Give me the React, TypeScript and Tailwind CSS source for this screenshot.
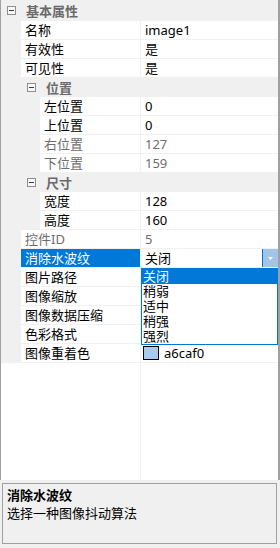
import React from 'react';

type Row =
  | { kind: 'cat'; label: string; level: number }
  | {
      kind: 'prop';
      name: string;
      value?: string;
      level: number;
      disabled?: boolean;
      selected?: boolean;
      swatch?: string;
    };

const rows: Row[] = [
  { kind: 'cat', label: '基本属性', level: 0 },
  { kind: 'prop', name: '名称', value: 'image1', level: 0 },
  { kind: 'prop', name: '有效性', value: '是', level: 0 },
  { kind: 'prop', name: '可见性', value: '是', level: 0 },
  { kind: 'cat', label: '位置', level: 1 },
  { kind: 'prop', name: '左位置', value: '0', level: 1 },
  { kind: 'prop', name: '上位置', value: '0', level: 1 },
  { kind: 'prop', name: '右位置', value: '127', level: 1, disabled: true },
  { kind: 'prop', name: '下位置', value: '159', level: 1, disabled: true },
  { kind: 'cat', label: '尺寸', level: 1 },
  { kind: 'prop', name: '宽度', value: '128', level: 1 },
  { kind: 'prop', name: '高度', value: '160', level: 1 },
  { kind: 'prop', name: '控件ID', value: '5', level: 0, disabled: true },
  { kind: 'prop', name: '消除水波纹', value: '关闭', level: 0, selected: true },
  { kind: 'prop', name: '图片路径', value: '', level: 0 },
  { kind: 'prop', name: '图像缩放', value: '', level: 0 },
  { kind: 'prop', name: '图像数据压缩', value: '', level: 0 },
  { kind: 'prop', name: '色彩格式', value: '', level: 0 },
  { kind: 'prop', name: '图像重着色', value: 'a6caf0', level: 0, swatch: '#a6caf0' },
];

const options = ['关闭', '稍弱', '适中', '稍强', '强烈'];

const MinusBox = () => (
  <div className="w-[9px] h-[9px] border border-[#8e8f8f] bg-[#f7f7f7] flex items-center justify-center shrink-0">
    <div className="w-[5px] h-px bg-[#3c3c3c]" />
  </div>
);

const CategoryRow = ({ label, level, first }: { label: string; level: number; first: boolean }) => (
  <div
    className={`flex items-center bg-[#f0f0f0] ${first ? 'h-[21px]' : 'h-[19px]'} ${
      level === 0 ? 'pl-[6px]' : 'pl-[26px]'
    }`}
  >
    <MinusBox />
    <span className="ml-[10px] font-bold text-[#6a6a6a]">{label}</span>
  </div>
);

const PropRow = ({ row }: { row: Extract<Row, { kind: 'prop' }> }) => {
  const muted = row.disabled ? 'text-[#6d6d6d]' : 'text-black';
  return (
    <div className="flex h-[19px]">
      <div className={`bg-[#f0f0f0] shrink-0 ${row.level === 0 ? 'w-[20px]' : 'w-[39px]'}`} />
      <div
        className={`flex items-center pl-[4px] border-b border-[#f0f0f0] shrink-0 ${
          row.level === 0 ? 'w-[119px]' : 'w-[100px]'
        } ${row.selected ? 'bg-[#0078d7] text-white' : muted}`}
      >
        {row.name}
      </div>
      <div className={`flex flex-1 items-center border-l border-b border-[#f0f0f0] ${muted}`}>
        {row.swatch ? (
          <div className="flex items-center pl-[2px]">
            <div className="w-[16px] h-[14px] border border-black" style={{ background: row.swatch }} />
            <span className="ml-[5px]">{row.value}</span>
          </div>
        ) : (
          <span className="pl-[4px] flex-1">{row.value}</span>
        )}
        {row.selected && (
          <div className="w-[16px] h-[18px] border-l border-[#0078d7] bg-[#a2c4e6] flex items-center justify-center self-start">
            <svg width="5" height="3" viewBox="0 0 5 3">
              <polygon points="0,0 5,0 2.5,3" fill="#ffffff" />
            </svg>
          </div>
        )}
      </div>
    </div>
  );
};

export default function App() {
  return (
    <div className="w-[280px] h-[548px] bg-[#f0f0f0] flex flex-col text-[13px] leading-[18px] font-['Noto_Sans','Noto_Sans_CJK_SC',sans-serif]">
      <div className="relative h-[480px] bg-white border-l border-r-2 border-[#a0a0a0] flex flex-col">
        {rows.map((row, i) =>
          row.kind === 'cat' ? (
            <CategoryRow key={i} label={row.label} level={row.level} first={i === 0} />
          ) : (
            <PropRow key={i} row={row} />
          )
        )}
        <div className="flex flex-1">
          <div className="w-[139px]" />
          <div className="flex-1 border-l border-[#f0f0f0]" />
        </div>

        <div className="absolute left-[140px] top-[268px] w-[137px] border border-[#0078d7] bg-white">
          {options.map((o, i) => (
            <div
              key={o}
              className={`h-[15px] leading-[15px] pl-[1px] ${i === 0 ? 'bg-[#0078d7] text-white' : 'text-black'}`}
            >
              {o}
            </div>
          ))}
        </div>
      </div>

      <div className="mt-[3px] ml-[2px] w-[275px] h-[61px] border border-[#a0a0a0] bg-[#f0f0f0] pt-[2px] pl-[4px] text-black">
        <div className="font-bold">消除水波纹</div>
        <div>选择一种图像抖动算法</div>
      </div>
    </div>
  );
}
